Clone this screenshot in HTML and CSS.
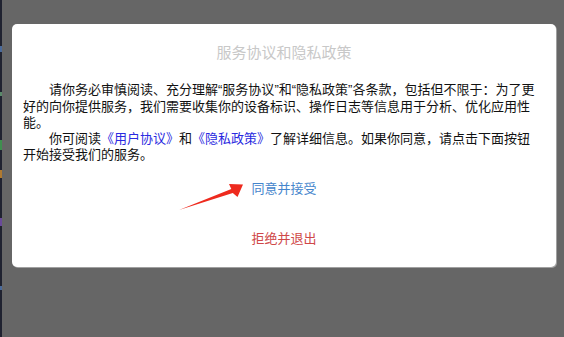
FILE: index.html
```html
<!DOCTYPE html>
<html lang="zh-CN">
<head>
<meta charset="utf-8">
<title>服务协议和隐私政策</title>
<link rel="stylesheet" href="styles.css">
</head>
<body>
<div class="screen">
  <div class="edge">
    <span class="bit b1"></span>
    <span class="bit b2"></span>
    <span class="bit b3"></span>
    <span class="bit b4"></span>
    <span class="bit b5"></span>
    <span class="bit b6"></span>
  </div>
  <div class="overlay">
    <div class="dialog">
      <div class="title">服务协议和隐私政策</div>
      <div class="body">
        <p class="para">请你务必审慎阅读、充分理解<span class="q">“</span>服务协议<span class="q">”</span>和<span class="q">“</span>隐私政策<span class="q">”</span>各条款，包括但不限于：为了更好的向你提供服务，我们需要收集你的设备标识、操作日志等信息用于分析、优化应用性<br>能。</p>
        <p class="para">你可阅读<a class="link">《用户协议》</a>和<a class="link">《隐私政策》</a>了解详细信息。如果你同意，请点击下面按钮开始接受我们的服务。</p>
      </div>
      <div class="btn agree">同意并接受</div>
      <div class="btn refuse">拒绝并退出</div>
    </div>
  </div>
  <svg class="arrow" width="564" height="337" viewBox="0 0 564 337">
    <polygon points="179,210 231.3,189 229,184 243,184.5 237.5,197 232.8,193" fill="#ee2a1e"/>
  </svg>
</div>
</body>
</html>
```

FILE: styles.css
```css
html, body {
  margin: 0;
  padding: 0;
}
body {
  width: 564px;
  height: 337px;
  overflow: hidden;
  background: #666666;
  font-family: "Noto Sans CJK SC", "Liberation Sans", sans-serif;
}
.screen {
  position: relative;
  display: flex;
  width: 564px;
  height: 337px;
}
.edge {
  width: 2px;
  background: #1f2230;
  display: flex;
  flex-direction: column;
}
.bit {
  display: block;
  width: 2px;
}
.b1 { margin-top: 46px; height: 6px; background: #4a6a9a; }
.b2 { margin-top: 40px; height: 4px; background: #5a8a6a; }
.b3 { margin-top: 44px; height: 10px; background: #3f8f4f; }
.b4 { margin-top: 20px; height: 8px; background: #b07a30; }
.b5 { margin-top: 40px; height: 8px; background: #6a4a9a; }
.b6 { margin-top: 60px; height: 4px; background: #4a6a9a; }
.overlay {
  flex: 1;
  padding: 24px 0 0 10px;
  background: #666666;
}
.dialog {
  width: 544px;
  height: 243px;
  box-sizing: border-box;
  background: #ffffff;
  border-radius: 5px;
  box-shadow: 1px 1px 0 #a0a0a0;
  padding: 18px 20px 0 11px;
  display: flex;
  flex-direction: column;
}
.title {
  font-size: 15px;
  line-height: 20px;
  color: #c8c8c8;
  text-align: center;
  padding-left: 9px;
}
.body {
  margin-top: 19px;
  font-size: 13px;
  line-height: 16px;
  color: #111111;
}
.para {
  margin: 0;
  text-indent: 2em;
}
.q {
  font-family: "Liberation Sans", sans-serif;
}
.link {
  color: #2a2ae0;
}
.btn {
  height: 40px;
  line-height: 40px;
  font-size: 13px;
  text-align: center;
  padding-left: 9px;
}
.agree {
  margin-top: 6px;
  color: #4585cc;
}
.refuse {
  margin-top: 10px;
  color: #cf4848;
}
.arrow {
  position: absolute;
  left: 0;
  top: 0;
  pointer-events: none;
}
```
